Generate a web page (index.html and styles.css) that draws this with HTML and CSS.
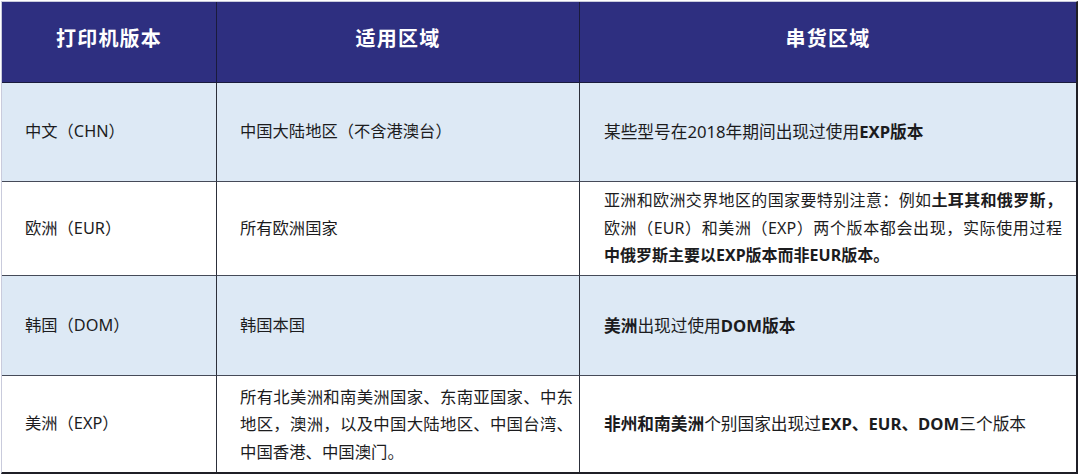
FILE: index.html
```html
<!DOCTYPE html>
<html lang="zh-CN">
<head>
<meta charset="utf-8">
<link rel="stylesheet" href="styles.css">
</head>
<body>
<div class="table">
  <div class="cell head"><div class="txt">打印机版本</div></div>
  <div class="cell head"><div class="txt">适用区域</div></div>
  <div class="cell head last"><div class="txt">串货区域</div></div>

  <div class="cell tint"><div class="txt">中文（CHN）</div></div>
  <div class="cell tint"><div class="txt">中国大陆地区（不含港澳台）</div></div>
  <div class="cell tint last"><div class="txt big">某些型号在2018年期间出现过使用<b>EXP版本</b></div></div>

  <div class="cell"><div class="txt">欧洲（EUR）</div></div>
  <div class="cell"><div class="txt">所有欧洲国家</div></div>
  <div class="cell last">
    <div class="txt small">
      <span class="jl">亚洲和欧洲交界地区的国家要特别注意：例如<b>土耳其和俄罗斯，</b></span>
      <span class="jl">欧洲（EUR）和美洲（EXP）两个版本都会出现，实际使用过程</span>
      <span class="ll"><b>中俄罗斯主要以EXP版本而非EUR版本。</b></span>
    </div>
  </div>

  <div class="cell tint"><div class="txt">韩国（DOM）</div></div>
  <div class="cell tint"><div class="txt">韩国本国</div></div>
  <div class="cell tint last"><div class="txt big"><b>美洲</b>出现过使用<b>DOM版本</b></div></div>

  <div class="cell end"><div class="txt">美洲（EXP）</div></div>
  <div class="cell end">
    <div class="txt mid">
      <span class="jl">所有北美洲和南美洲国家、东南亚国家、中东</span>
      <span class="jl">地区，澳洲，以及中国大陆地区、中国台湾、</span>
      <span class="ll">中国香港、中国澳门。</span>
    </div>
  </div>
  <div class="cell end last"><div class="txt big"><b>非州和南美洲</b>个别国家出现过<b>EXP、EUR、DOM</b>三个版本</div></div>
</div>
</body>
</html>
```

FILE: styles.css
```css
* { box-sizing: border-box; }

html, body {
  margin: 0;
  padding: 0;
  background: #ffffff;
}

body {
  font-family: "Noto Sans", "Noto Sans CJK SC", sans-serif;
  color: #1c1c1e;
  font-size: 16.3px;
}

.table {
  margin: 1px 0 0 1px;
  width: 1077px;
  display: grid;
  grid-template-columns: 215px 363px 1fr;
  grid-template-rows: 81px 99px 94px 100px 96px;
  border-top: 1px solid #c9cbdc;
  border-left: 1px solid #c9cbdc;
  border-right: 2px solid #1f1f26;
  border-bottom: 2px solid #1f1f26;
}

.cell {
  display: flex;
  flex-direction: column;
  justify-content: center;
  padding: 0 6px 0 23px;
  border-right: 1px solid #2c2f3a;
  border-bottom: 1px solid #454a58;
  background: #ffffff;
}

.txt {
  line-height: 27.5px;
  white-space: nowrap;
}

.txt.big {
  font-size: 16.7px;
}

.txt.small {
  font-size: 16px;
}

.txt.mid {
  font-size: 16.4px;
}

.cell.last {
  border-right: none;
  padding-left: 24px;
  padding-right: 14px;
}

.cell.end {
  border-bottom: none;
}

.cell b {
  font-weight: 700;
}

.head {
  background: #2e2f80;
  color: #ffffff;
  font-family: "Noto Sans CJK SC", sans-serif;
  font-weight: 700;
  font-size: 20px;
  letter-spacing: 1.2px;
  align-items: center;
  padding: 0 0 9px 0;
  border-bottom: 1px solid #1a1b3c;
  border-right: 1px solid #1a1b3c;
}

.head.last {
  padding: 0 0 9px 0;
}

.tint {
  background: #dde9f5;
}

.jl {
  display: block;
  text-align: justify;
  text-align-last: justify;
}

.ll {
  display: block;
}
```
